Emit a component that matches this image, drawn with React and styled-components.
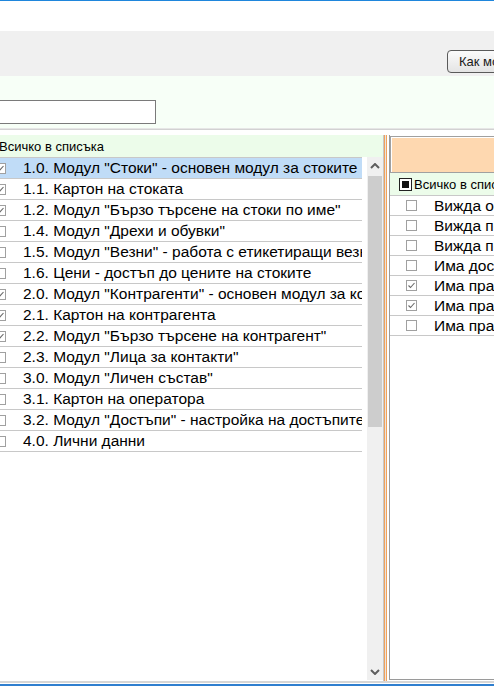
import React from "react";
import styled, { createGlobalStyle } from "styled-components";

const GlobalStyle = createGlobalStyle`
  html, body { margin: 0; padding: 0; overflow: hidden; background: #fff; }
  body { font-family: "Liberation Sans", Arial, sans-serif; }
  * { box-sizing: border-box; }
`;

const Viewport = styled.div`
  width: 494px;
  height: 686px;
  overflow: hidden;
  border-top: 1px solid #1f86dc;
`;

const Frame = styled.div`
  width: 720px;
  margin-left: -21px;
  display: flex;
  flex-direction: column;
  height: 685px;
`;

const TitleArea = styled.div`
  height: 30px;
  background: #fff;
`;

const Toolbar = styled.div`
  height: 45px;
  background: #f0f0f0;
  display: flex;
  align-items: flex-end;
  padding-left: 468px;
  padding-bottom: 3px;
`;

const HelpButton = styled.button`
  height: 23px;
  padding: 0 11px;
  border: 1px solid #5a5a5a;
  border-radius: 4px;
  background: linear-gradient(#fbfbfb, #e4e4e4);
  font-family: "Liberation Sans", Arial, sans-serif;
  font-size: 13px;
  color: #1a1a1a;
  white-space: nowrap;
  text-align: left;
`;

const FilterBar = styled.div`
  height: 52px;
  background: #f7fff7;
  display: flex;
  align-items: flex-start;
  padding-top: 24px;
  padding-left: 8px;
`;

const SearchInput = styled.input`
  width: 169px;
  height: 24px;
  border: 1px solid #7a7a7a;
  background: #fff;
  font-family: "Liberation Sans", Arial, sans-serif;
  font-size: 13px;
`;

const Divider = styled.div`
  height: 2px;
  border-top: 1px solid #e6e6e6;
  border-bottom: 1px solid #d2d2d2;
`;

const Spacer = styled.div`
  height: 5px;
  background: #fff;
`;

const Main = styled.div`
  flex: 1;
  display: flex;
  min-height: 0;
`;

const LeftPanel = styled.div`
  width: 404px;
  flex-shrink: 0;
  display: flex;
  flex-direction: column;
`;

const HeaderRow = styled.div`
  height: ${(p) => p.$h}px;
  background: #ecfcea;
  display: flex;
  align-items: center;
  padding-left: ${(p) => p.$pad}px;
  gap: ${(p) => p.$gap}px;
  font-size: 13px;
  color: #000;
  white-space: nowrap;
  overflow: hidden;
  flex-shrink: 0;
  border-bottom: ${(p) => (p.$line ? "1px solid #c8c8c8" : "none")};
`;

const LeftBody = styled.div`
  flex: 1;
  display: flex;
  min-height: 0;
`;

const List = styled.div`
  flex: 1;
  padding-right: 5px;
  min-width: 0;
`;

const ListInner = styled.div`
  border-top: 1px solid #c8c8c8;
`;

const Row = styled.div`
  height: ${(p) => p.$h}px;
  border-bottom: 1px solid #c8c8c8;
  background: ${(p) => (p.$selected ? "#c0dcf7" : "#fff")};
  display: flex;
  align-items: center;
  padding-left: 16px;
  white-space: nowrap;
  overflow: hidden;
  font-size: 15.5px;
  color: #000;
`;

const RowText = styled.span`
  margin-left: 17px;
`;

const Box = styled.span`
  width: 11px;
  height: 11px;
  flex-shrink: 0;
  border: 1px solid #a0a0a0;
  background: #fff;
  display: flex;
  align-items: center;
  justify-content: center;
`;

const AllBox = styled.span`
  width: 13px;
  height: 13px;
  flex-shrink: 0;
  border: 1px solid #222;
  background: #fff;
  display: flex;
  align-items: center;
  justify-content: center;
  &::after {
    content: "";
    width: 7px;
    height: 7px;
    background: #111;
  }
`;

const ScrollBar = styled.div`
  width: 16px;
  flex-shrink: 0;
  background: #f0f0f0;
  display: flex;
  flex-direction: column;
  margin-bottom: 1px;
`;

const ScrollArrow = styled.div`
  height: 17px;
  display: flex;
  align-items: center;
  justify-content: center;
  flex-shrink: 0;
`;

const Thumb = styled.div`
  height: 251px;
  margin: 2px 1px 0 1px;
  background: #cdcdcd;
`;

const Track = styled.div`
  flex: 1;
`;

const Splitter = styled.div`
  width: 6px;
  flex-shrink: 0;
  background: linear-gradient(
    to right,
    #c8c8c8 0 1px,
    #f2a25a 1px 2px,
    #e4e4e4 2px 3px,
    #f2a25a 3px 4px,
    #ffffff 4px 6px
  );
`;

const RightPanel = styled.div`
  flex: 1;
  display: flex;
  flex-direction: column;
  border-left: 1px solid #9a9a9a;
  border-bottom: 1px solid #9a9a9a;
  margin-bottom: 1px;
  padding-top: 1px;
`;

const PeachBox = styled.div`
  height: 37px;
  background: #fed8b0;
  border: 1px solid #a0a0a0;
  box-shadow: inset 1px 1px 0 #fff;
  flex-shrink: 0;
`;

const Footer = styled.div`
  height: 5px;
  border-top: 2px solid #d6d6d6;
  border-bottom: 2px solid #2f7fcf;
  background: #fff;
  flex-shrink: 0;
`;

const Check = ({ on }) => (
  <Box>
    {on && (
      <svg width="9" height="9" viewBox="0 0 9 9">
        <path d="M1.5 4.5 L3.5 6.5 L7.5 2" fill="none" stroke="#6a6a6a" strokeWidth="1.1" />
      </svg>
    )}
  </Box>
);

const Chevron = ({ down }) => (
  <svg width="10" height="6" viewBox="0 0 10 6">
    <path
      d={down ? "M1 1 L5 5 L9 1" : "M1 5 L5 1 L9 5"}
      fill="none"
      stroke="#5e5e5e"
      strokeWidth="2"
    />
  </svg>
);

const modules = [
  ['1.0. Модул "Стоки" - основен модул за стоките', true],
  ["1.1. Картон на стоката", true],
  ['1.2. Модул "Бързо търсене на стоки по име"', true],
  ['1.4. Модул "Дрехи и обувки"', false],
  ['1.5. Модул "Везни" - работа с етикетиращи везни', false],
  ["1.6. Цени - достъп до цените на стоките", false],
  ['2.0. Модул "Контрагенти" - основен модул за контрагентите', true],
  ["2.1. Картон на контрагента", true],
  ['2.2. Модул "Бързо търсене на контрагент"', true],
  ['2.3. Модул "Лица за контакти"', false],
  ['3.0. Модул "Личен състав"', false],
  ["3.1. Картон на оператора", false],
  ['3.2. Модул "Достъпи" - настройка на достъпите', false],
  ["4.0. Лични данни", false],
];

const rights = [
  ["Вижда обобщени данни", false],
  ["Вижда покупните цени", false],
  ["Вижда последните доставки", false],
  ["Има достъп до справките", false],
  ["Има право да добавя", true],
  ["Има право да редактира", true],
  ["Има право да изтрива", false],
];

export default function App() {
  return (
    <>
      <GlobalStyle />
      <Viewport>
        <Frame>
          <TitleArea />
          <Toolbar>
            <HelpButton>Как мога да помогна?</HelpButton>
          </Toolbar>
          <FilterBar>
            <SearchInput type="text" />
          </FilterBar>
          <Divider />
          <Spacer />
          <Main>
            <LeftPanel>
              <HeaderRow $h={22} $pad={6} $gap={1}>
                <AllBox />
                <span>Всичко в списъка</span>
              </HeaderRow>
              <LeftBody>
                <List>
                  <ListInner>
                    {modules.map(([t, on], i) => (
                      <Row key={t} $h={21} $selected={i === 0}>
                        <Check on={on} />
                        <RowText>{t}</RowText>
                      </Row>
                    ))}
                  </ListInner>
                </List>
                <ScrollBar>
                  <ScrollArrow>
                    <Chevron />
                  </ScrollArrow>
                  <Thumb />
                  <Track />
                  <ScrollArrow>
                    <Chevron down />
                  </ScrollArrow>
                </ScrollBar>
              </LeftBody>
            </LeftPanel>
            <Splitter />
            <RightPanel>
              <PeachBox />
              <HeaderRow $h={23} $pad={9} $gap={2} $line>
                <AllBox />
                <span>Всичко в списъка</span>
              </HeaderRow>
              {rights.map(([t, on]) => (
                <Row key={t} $h={20}>
                  <Check on={on} />
                  <RowText>{t}</RowText>
                </Row>
              ))}
            </RightPanel>
          </Main>
          <Footer />
        </Frame>
      </Viewport>
    </>
  );
}
